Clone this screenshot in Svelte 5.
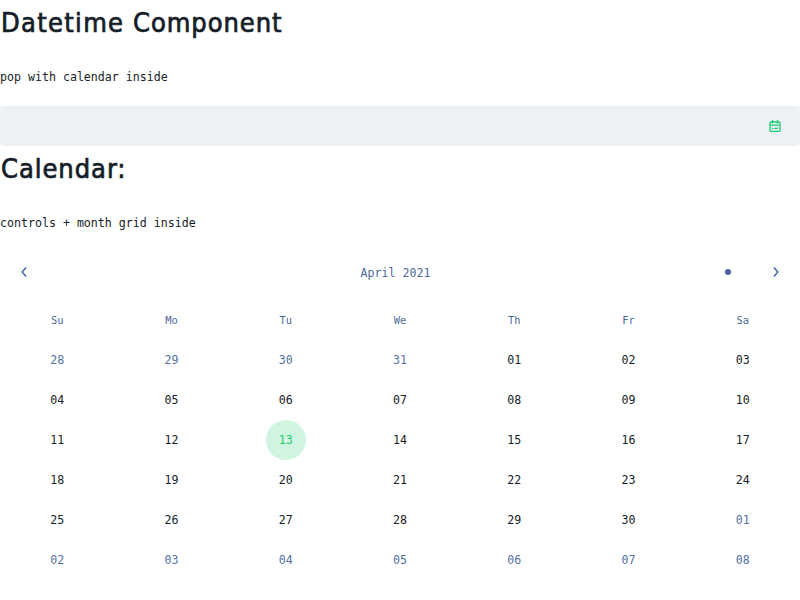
<script>
  const weekdays = ['Su', 'Mo', 'Tu', 'We', 'Th', 'Fr', 'Sa'];
  const days = Array.from({ length: 42 }, (_, i) => {
    const d = new Date(2021, 2, 28 + i);
    return {
      label: String(d.getDate()).padStart(2, '0'),
      outside: d.getMonth() !== 3,
      selected: d.getMonth() === 3 && d.getDate() === 13
    };
  });
</script>

<main>
  <h1><span class="word">Datetime</span><span>Component</span></h1>
  <p>pop with calendar inside</p>
  <div class="field">
    <svg width="12" height="13" viewBox="0 0 12 13" fill="none" stroke="#1ccb6e">
      <rect x="1" y="2" width="10" height="9.4" rx="1.2" stroke-width="1.3" />
      <path d="M3.5 0V3.6M8.5 0V3.6" stroke-width="1.2" />
      <path d="M1 5.2H11" stroke-width="1.2" />
      <path d="M3 8.4H4.2M5.2 8.4H9" stroke-width="1.2" />
    </svg>
  </div>
  <h1>Calendar:</h1>
  <p>controls + month grid inside</p>
  <div class="controls">
    <button aria-label="Previous month">
      <svg width="16" height="16" viewBox="0 0 16 16"><path d="M10 3.4L6.2 8L10 12.6" /></svg>
    </button>
    <div class="title">April 2021</div>
    <button aria-label="Today"><i></i></button>
    <button aria-label="Next month">
      <svg width="16" height="16" viewBox="0 0 16 16"><path d="M6 3.4L9.8 8L6 12.6" /></svg>
    </button>
  </div>
  <div class="grid head">
    {#each weekdays as day}<div>{day}</div>{/each}
  </div>
  <div class="grid">
    {#each days as day}
      <div class:outside={day.outside}><span class:selected={day.selected}>{day.label}</span></div>
    {/each}
  </div>
</main>

<style>
  :global(body) {
    margin: 0;
    background: #fff;
  }
  main {
    width: 800px;
    height: 600px;
    overflow: hidden;
    color: #151d28;
    font: 11.627px/20px 'DejaVu Sans Mono', monospace;
  }
  h1 {
    display: flex;
    box-sizing: border-box;
    margin: 0;
    height: 46px;
    padding-left: 1px;
    font: 400 27px/46px 'DejaVu Sans Condensed', 'DejaVu Sans', sans-serif;
    font-stretch: condensed;
    letter-spacing: 0.95px;
    -webkit-text-stroke: 0.7px #151d28;
    white-space: nowrap;
  }
  .word {
    width: 132px;
    letter-spacing: 1.3px;
  }
  p {
    margin: 20px 0;
    height: 20px;
    line-height: 22px;
  }
  .field {
    display: flex;
    align-items: center;
    justify-content: flex-end;
    box-sizing: border-box;
    height: 40px;
    padding-right: 19px;
    border-radius: 4px;
    background: #ebf1f5;
  }
  .controls {
    display: flex;
    align-items: center;
    height: 48px;
    margin-top: -4px;
    color: #4b6a97;
  }
  button {
    display: flex;
    align-items: center;
    justify-content: center;
    width: 48px;
    height: 48px;
    padding: 0;
    border: 0;
    background: none;
  }
  button path {
    fill: none;
    stroke: #4b6a97;
    stroke-width: 1.5;
  }
  i {
    width: 6px;
    height: 6px;
    border-radius: 50%;
    background: #4b6a97;
  }
  .title {
    flex: 1;
    padding: 2px 0 0 39px;
    line-height: 20px;
    text-align: center;
  }
  .grid {
    display: grid;
    grid-template-columns: repeat(7, 1fr);
    grid-auto-rows: 40px;
    line-height: 40px;
    text-align: center;
  }
  .head {
    grid-auto-rows: 44px;
    line-height: 48px;
    font-size: 10.4px;
    color: #4b6a97;
  }
  .grid span {
    display: block;
    width: 40px;
    height: 40px;
    margin: 0 auto;
    border-radius: 50%;
  }
  .outside {
    color: #53729f;
  }
  .grid .selected {
    background: #d2f5e2;
    color: #1ccb6e;
  }
</style>
